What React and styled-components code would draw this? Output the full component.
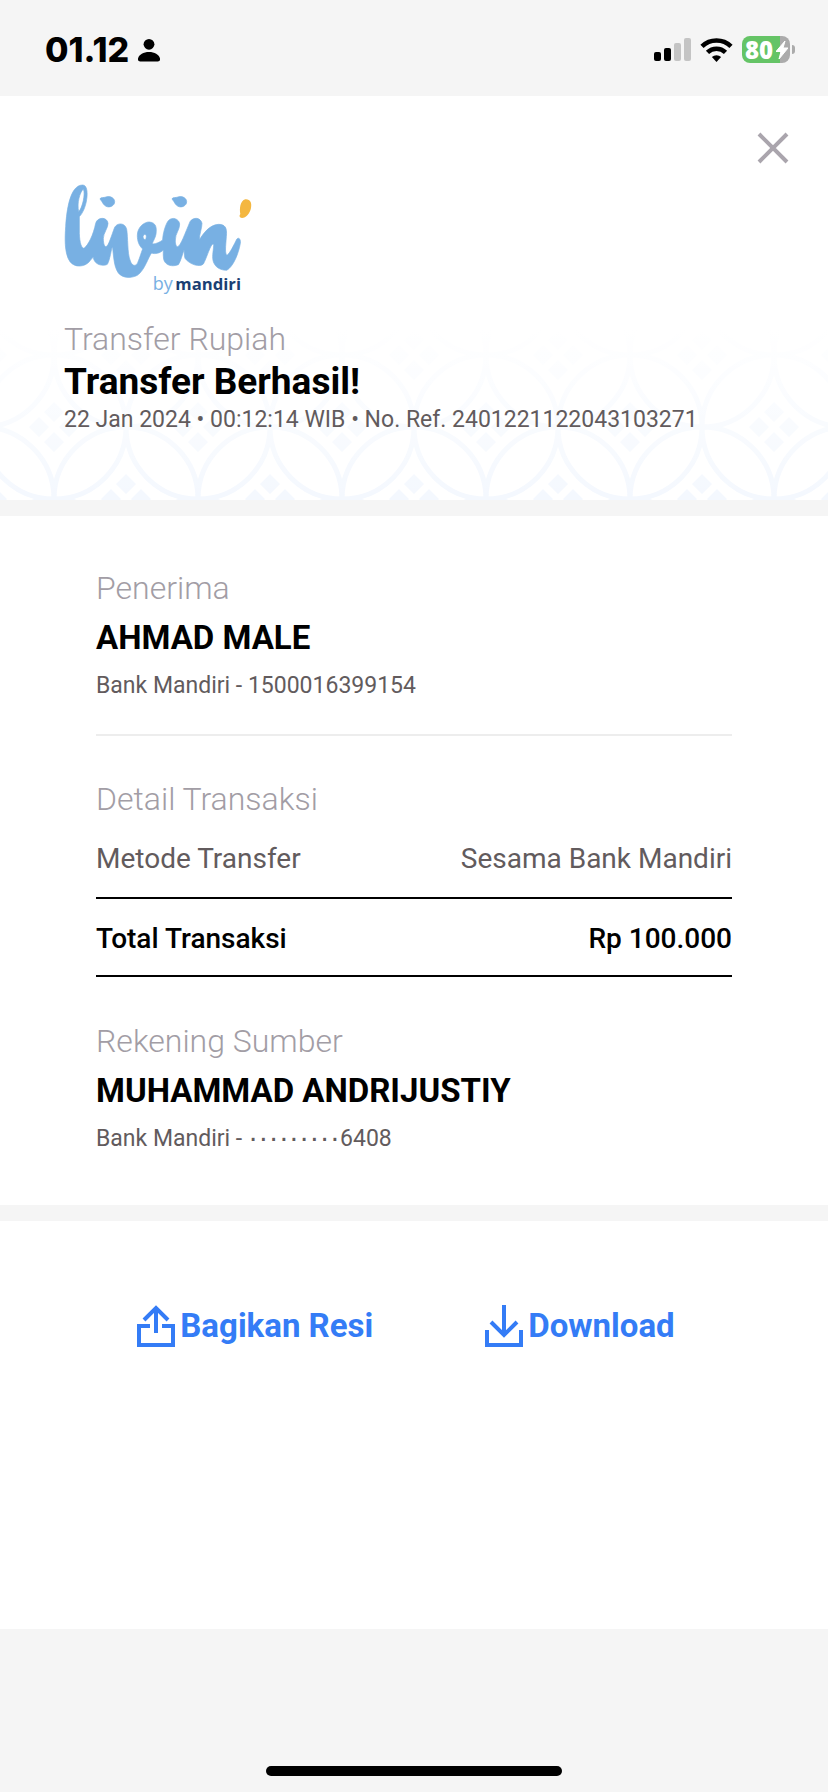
import React from "react";
import styled, { createGlobalStyle } from "styled-components";

const GlobalStyle = createGlobalStyle`
  * { box-sizing: border-box; }
  body {
    margin: 0;
    background: #f5f5f5;
    color: #000;
    font-family: Roboto, "Liberation Sans", sans-serif;
  }
  h1, h2, p, dl, dt, dd { margin: 0; }
`;

const Screen = styled.div`
  display: flex;
  flex-direction: column;
  min-height: 100vh;
`;

const StatusBar = styled.div`
  display: flex;
  align-items: center;
  justify-content: space-between;
  height: 96px;
  padding: 3px 33px 0 45px;
  background: #f5f5f5;
`;

const Clock = styled.div`
  display: flex;
  align-items: center;
  gap: 9px;
  font: 800 34px/38px Inter, sans-serif;
`;

const Indicators = styled.div`
  display: flex;
  align-items: center;
  gap: 9px;
`;

const Battery = styled.div`
  position: relative;
  display: flex;
  align-items: center;
  width: 48px;
  height: 27px;
  margin-right: 5px;
  padding-left: 3px;
  border-radius: 8px;
  background: linear-gradient(to right, #65c466 38px, #ababab 38px);
  color: #fff;
  font: 800 24px/27px "Open Sans", sans-serif;

  &::after {
    content: "";
    position: absolute;
    right: -5px;
    top: 9px;
    width: 3px;
    height: 9px;
    border-radius: 0 4px 4px 0;
    background: #ababab;
  }
`;

const Bolt = styled.svg`
  position: absolute;
  right: 2px;
  top: 5px;
`;

const Header = styled.header`
  position: relative;
  padding: 87px 64px 66px;
  background: #fff;
`;

const Pattern = styled.svg`
  position: absolute;
  left: 0;
  bottom: 0;
  width: 100%;
  height: 190px;
`;

const CloseButton = styled.button`
  position: absolute;
  top: 29px;
  right: 32px;
  display: flex;
  padding: 0;
  border: 0;
  background: none;
`;

const Logo = styled.svg`
  display: block;
  margin-bottom: 25px;
`;

const Summary = styled.div`
  position: relative;
`;

const Label = styled.h2`
  font-size: 32px;
  font-weight: 300;
  line-height: 36px;
  color: #a29da5;
`;

const Title = styled.h1`
  margin: 4px 0 3px;
  font-size: 37px;
  font-weight: 700;
  line-height: 42px;
`;

const Meta = styled.p`
  font-size: 23px;
  line-height: 28px;
  color: #625b5d;
`;

const MaskDots = styled.span`
  font: 700 17px/20px "DejaVu Sans Mono", monospace;
`;

const Details = styled.main`
  margin: 16px 0;
  padding: 54px 96px 52px;
  background: #fff;
`;

const Name = styled.p`
  margin: 12px 0 14px;
  font-size: 33px;
  font-weight: 700;
  line-height: 40px;
`;

const Divider = styled.hr`
  height: 2px;
  margin: 34px 0 45px;
  border: 0;
  background: #ededed;
`;

const Rows = styled.dl`
  margin: 26px 0 46px;
`;

const Row = styled.div`
  display: flex;
  justify-content: space-between;
  padding: ${(p) => (p.$total ? "24px 0 20px" : "0 0 22px")};
  border-bottom: 2px solid #000;
  font-size: 28px;
  line-height: 32px;
  font-weight: ${(p) => (p.$total ? 500 : 400)};
  color: ${(p) => (p.$total ? "#000" : "#625b5d")};
`;

const Actions = styled.div`
  flex: 1;
  display: flex;
  align-items: flex-start;
  justify-content: center;
  gap: 112px;
  padding: 83px 96px 60px 80px;
  background: #fff;
`;

const ActionButton = styled.button`
  display: flex;
  align-items: center;
  gap: 5px;
  padding: 0;
  border: 0;
  background: none;
  color: #347cf6;
  font: 700 33px/44px Roboto, "Liberation Sans", sans-serif;
`;

const HomeArea = styled.footer`
  display: flex;
  align-items: flex-end;
  justify-content: center;
  height: 163px;
  padding-bottom: 16px;
`;

const HomeIndicator = styled.div`
  width: 296px;
  height: 10px;
  border-radius: 5px;
  background: #000;
`;

function Motif({ x, y }) {
  return (
    <g transform={`translate(${x} ${y})`}>
      <circle r="72" fill="none" stroke="#f4f8fe" strokeWidth="5" />
      <path
        d="M0-25l10 10-10 10-10-10zM0 5l10 10-10 10-10-10zM-15-10l10 10-10 10-10-10zM15-10l10 10-10 10-10-10z"
        fill="#f4f8fe"
      />
    </g>
  );
}

function BatikPattern() {
  return (
    <Pattern aria-hidden="true">
      <defs>
        <pattern id="batik" x="-18" y="45" width="144" height="144" patternUnits="userSpaceOnUse">
          <Motif x={72} y={72} />
          <Motif x={0} y={0} />
          <Motif x={144} y={0} />
          <Motif x={0} y={144} />
          <Motif x={144} y={144} />
        </pattern>
        <linearGradient id="fade" x1="0" y1="0" x2="0" y2="1">
          <stop offset="0.1" stopColor="#fff" />
          <stop offset="1" stopColor="#fff" stopOpacity="0" />
        </linearGradient>
      </defs>
      <rect width="100%" height="100%" fill="url(#batik)" />
      <rect width="100%" height="100%" fill="url(#fade)" />
    </Pattern>
  );
}

function LivinLogo() {
  return (
    <Logo width="190" height="113" viewBox="42 39 570 339" role="img" aria-label="livin' by mandiri">
      <path
        fill="#78b0e3"
        stroke="#78b0e3"
        strokeWidth="2"
        fillRule="evenodd"
        d="M98 45C112 45 113 70 110 88C107 110 98 130 88 140L88 190C89 220 95 235 102 235C115 225 130 195 137 160C142 140 172 140 174 160C175 172 160 190 160 205C160 222 164 230 168 230C175 230 185 195 194 172C202 157 226 158 230 178C234 200 232 250 240 270C246 290 258 290 263 278C270 262 276 240 278 237C266 226 262 212 262 196C262 170 285 155 298 156C320 158 320 175 318 192C316 205 305 220 308 222C318 222 330 216 338 210C338 195 345 165 355 152C368 138 388 148 389 162C389 180 376 190 376 210C376 222 378 230 383 230C392 228 405 190 420 155C430 140 452 142 456 160C456 175 448 192 448 210C460 190 478 165 505 163C525 163 532 172 529 200C527 230 524 250 531 256C540 250 553 222 560 208C566 200 573 208 571 220C566 250 550 290 530 301C505 301 487 285 488 260C488 245 493 225 490 222C482 220 470 265 460 282C450 292 420 285 405 265C402 255 403 240 402 240C398 250 392 275 385 284C365 292 345 285 341 268C339 255 340 245 340 240C330 250 315 253 305 249C295 260 285 300 262 316C240 327 210 325 200 300C190 280 190 240 187 230C184 235 180 270 172 283C160 290 132 285 130 262C128 262 122 270 118 275C105 290 75 295 60 275C42 250 45 200 47 170C50 120 60 45 98 45ZM100 58C90 65 80 100 86 125C97 115 107 70 100 58ZM281 195c7-5 11 4 5 15c-6-2-9-10-5-15Z"
      />
      <path
        fill="#78b0e3"
        stroke="#78b0e3"
        strokeWidth="2"
        d="M150 87C151 81 160 84 168 81C180 77 194 84 194 95C194 108 178 114 168 109C160 105 158 97 150 87ZM366 87C367 81 376 84 384 81C396 77 410 84 410 95C410 108 394 114 384 109C376 105 374 97 366 87Z"
      />
      <path
        fill="#f4b740"
        d="M586 88C601 87 606 98 603 114C600 130 588 144 576 144C568 143 567 137 571 132C568 118 570 92 586 88Z"
      />
      <text x="308" y="361" fontFamily="Open Sans, sans-serif" fontSize="54" fill="#78b0e3">by</text>
      <text x="376" y="361" fontFamily="Open Sans, sans-serif" fontSize="50" fontWeight="700" fill="#1b3f73">mandiri</text>
    </Logo>
  );
}

function AccountBlock({ label, name, children }) {
  return (
    <section>
      <Label>{label}</Label>
      <Name>{name}</Name>
      <Meta>{children}</Meta>
    </section>
  );
}

export default function App() {
  return (
    <Screen>
      <GlobalStyle />
      <StatusBar>
        <Clock>
          01.12
          <svg width="22" height="24" viewBox="0 0 22 24" aria-hidden="true">
            <circle cx="11" cy="6.3" r="5.4" />
            <path d="M0 20.500C1 16.500 5.500 14 11 14s10 2.500 11 6.500c.3 2-.6 3-2.200 3H2.200C.6 23.500-.3 22.500 0 20.500z" />
          </svg>
        </Clock>
        <Indicators>
          <svg width="37" height="23" viewBox="0 0 37 23" aria-hidden="true">
            <rect y="14" width="7" height="9" rx="2" />
            <rect x="10" y="10" width="7" height="13" rx="2" />
            <rect x="20" y="5" width="7" height="18" rx="2" fill="#c4c4c4" />
            <rect x="30" width="7" height="23" rx="2" fill="#c4c4c4" />
          </svg>
          <svg width="33" height="24" viewBox="0 0 33 24" aria-hidden="true">
            <g fill="none" stroke="#000" strokeWidth="4.600">
              <path d="M2 8.300a21 21 0 0 1 29 0" />
              <path d="M7.500 14.300a13 13 0 0 1 18 0" />
            </g>
            <path d="M16.500 24l-4.600-4.900a6.600 6.600 0 0 1 9.200 0z" />
          </svg>
          <Battery>
            80
            <Bolt width="12" height="18" viewBox="0 0 12 18" aria-hidden="true">
              <path d="M9 0L0 10.500h5L3 18l9-11H7z" fill="#fff" stroke="#fff" strokeLinejoin="round" />
            </Bolt>
          </Battery>
        </Indicators>
      </StatusBar>

      <Header>
        <BatikPattern />
        <CloseButton aria-label="Tutup">
          <svg width="46" height="46" viewBox="0 0 46 46" aria-hidden="true">
            <path d="M9 9l28 28M37 9L9 37" stroke="#aaa5ad" strokeWidth="4" />
          </svg>
        </CloseButton>
        <Summary>
          <LivinLogo />
          <Label as="p">Transfer Rupiah</Label>
          <Title>Transfer Berhasil!</Title>
          <Meta>22 Jan 2024 • 00:12:14 WIB • No. Ref. 2401221122043103271</Meta>
        </Summary>
      </Header>

      <Details>
        <AccountBlock label="Penerima" name="AHMAD MALE">
          Bank Mandiri - 1500016399154
        </AccountBlock>
        <Divider />
        <section>
          <Label>Detail Transaksi</Label>
          <Rows>
            <Row>
              <dt>Metode Transfer</dt>
              <dd>Sesama Bank Mandiri</dd>
            </Row>
            <Row $total>
              <dt>Total Transaksi</dt>
              <dd>Rp 100.000</dd>
            </Row>
          </Rows>
        </section>
        <AccountBlock label="Rekening Sumber" name="MUHAMMAD ANDRIJUSTIY">
          Bank Mandiri - <MaskDots>·········</MaskDots>6408
        </AccountBlock>
      </Details>

      <Actions>
        <ActionButton>
          <svg width="38" height="42" viewBox="0 0 38 42" fill="none" stroke="currentColor" strokeWidth="4" aria-hidden="true">
            <path d="M13 21H2v19h34V21H25M19 28V4M7 15L19 3l12 12" />
          </svg>
          Bagikan Resi
        </ActionButton>
        <ActionButton>
          <svg width="38" height="42" viewBox="0 0 38 42" fill="none" stroke="currentColor" strokeWidth="4" aria-hidden="true">
            <path d="M2 25v15h34V25M19 0v30M6 17l13 13 13-13" />
          </svg>
          Download
        </ActionButton>
      </Actions>

      <HomeArea>
        <HomeIndicator />
      </HomeArea>
    </Screen>
  );
}
